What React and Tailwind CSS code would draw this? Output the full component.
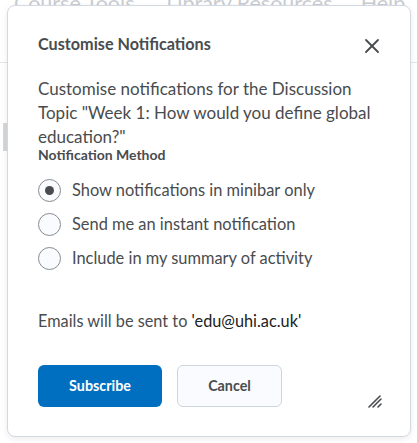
import { X } from 'lucide-react';

const font = { fontFamily: 'Lato, "Noto Sans", sans-serif' };

const Radio = ({ checked, label }) => (
  <label className="flex h-[34px] items-center gap-[11px]">
    <span className="flex h-[23px] w-[23px] items-center justify-center rounded-full border border-[#868c8f] bg-[#f9fbff]">
      {checked && <span className="h-[9px] w-[9px] rounded-full bg-[#494c4e]" />}
    </span>
    <span className="text-[16.4px] text-[#494c4e]">{label}</span>
  </label>
);

const App = () => {
  return (
    <div className="relative h-[443px] w-[417px] overflow-hidden bg-white" style={font}>
      {/* faded page behind the dialog */}
      <div className="absolute inset-0 text-[#c9cdd1]">
        <div className="-mt-[13px] flex gap-[26px] pl-[14px] text-[21.5px]">
          <span>Course Tools ▾</span>
          <span>Library Resources ▾</span>
          <span>Help ▾</span>
        </div>
        <div className="mt-[10px] h-px w-full bg-[#e3e6e9]" />
        <div className="ml-[3px] mt-[60px] h-[28px] w-[5px] bg-[#d5d8db]" />
      </div>

      <div className="absolute left-[7px] top-[5px] flex h-[432px] w-[404px] flex-col rounded-[8px] border border-[#d3d9e3] bg-white pl-[30px] pr-[30px] shadow-[0_2px_6px_rgba(0,0,0,0.08)]">
        <div className="mt-[24px] flex items-center justify-between">
          <h2 className="text-[16.2px] font-bold text-[#494c4e]">Customise Notifications</h2>
          <X size={24} strokeWidth={1.8} className="mr-[-4px] mt-[4px] text-[#494c4e]" />
        </div>

        <p className="mt-[19px] text-[17px] leading-[24px] text-[#494c4e]">
          Customise notifications for the Discussion Topic "Week 1: How would you define global education?"
        </p>
        <div className="-mt-[3px] text-[14px] font-bold leading-[18px] text-[#494c4e]">Notification Method</div>

        <div className="mt-[9px] flex flex-col">
          <Radio checked label="Show notifications in minibar only" />
          <Radio label="Send me an instant notification" />
          <Radio label="Include in my summary of activity" />
        </div>

        <p className="mt-[34px] text-[16.3px] leading-[24px] text-[#494c4e]">
          Emails will be sent to <span className="text-[#202122]">'edu@uhi.ac.uk'</span>
        </p>

        <div className="mt-[31px] flex items-center gap-[15px]">
          <button className="h-[42px] w-[124px] rounded-[6px] bg-[#006fbf] text-[14.3px] font-bold text-white">
            Subscribe
          </button>
          <button className="h-[42px] w-[105px] rounded-[6px] border border-[#cdd5dc] bg-[#f9fbff] text-[14.3px] font-bold text-[#494c4e]">
            Cancel
          </button>
          <svg className="ml-auto mr-[-2px] mt-[30px]" width="14" height="14" viewBox="0 0 14 14">
            <path d="M1 13 L12 2 M5 13 L13 5 M10 13 L13 10" stroke="#494c4e" strokeWidth="1.6" strokeLinecap="round" />
          </svg>
        </div>
      </div>
    </div>
  );
};

export default App;
